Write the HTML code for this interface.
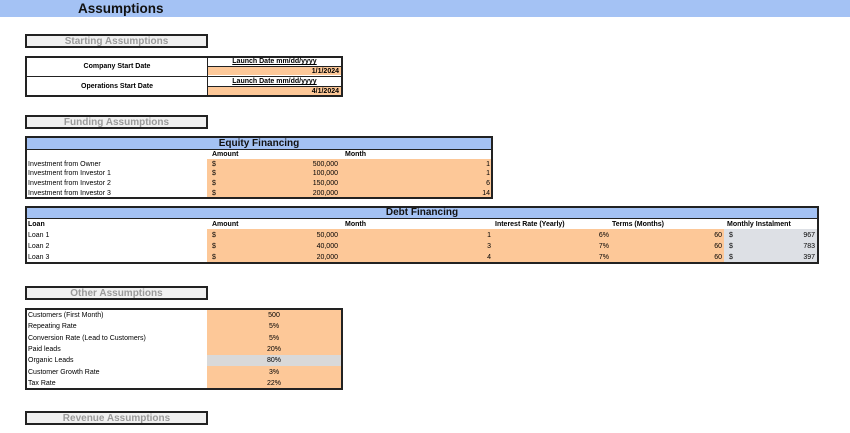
<!DOCTYPE html>
<html><head><style>
*{margin:0;padding:0;box-sizing:border-box}
body{width:850px;height:433px;background:#fff;position:relative;overflow:hidden;font-family:"Liberation Sans",sans-serif;color:#000}
.a{position:absolute}
.sec{position:absolute;left:25px;width:183px;height:14px;background:#f0f0f0;border:2px solid #222;color:#9a9a9a;font-weight:bold;font-size:10px;text-align:center;line-height:11px}
.t{font-size:7px;line-height:7px;white-space:nowrap}
.b{font-weight:bold}
.r{text-align:right}
.or{background:#fdc898}
.gy{background:#dde0e5}
.box{position:absolute;border:2px solid #222}
.hdr{background:#a4c2f4;font-weight:bold;font-size:10px;text-align:center;color:#111;border-bottom:1px solid #222}
</style></head><body>
<div class="a" style="left:0;top:0;width:850px;height:17px;background:#a4c2f4"></div>
<div class="a b" style="left:78px;top:1px;font-size:13.5px;line-height:15px;color:#111">Assumptions</div>

<div class="sec" style="top:34px">Starting Assumptions</div>

<div class="box" style="left:25px;top:56px;width:318px;height:41px"></div>
<div class="a" style="left:27px;top:76px;width:314px;height:1px;background:#222"></div>
<div class="a" style="left:207px;top:58px;width:1px;height:37px;background:#222"></div>
<div class="a t b" style="left:27px;top:63px;width:180px;text-align:center">Company Start Date</div>
<div class="a t b" style="left:27px;top:83px;width:180px;text-align:center">Operations Start Date</div>
<div class="a t b" style="left:208px;top:58px;width:133px;text-align:center;text-decoration:underline">Launch Date mm/dd/yyyy</div>
<div class="a or t b r" style="left:208px;top:66px;width:133px;height:9px;padding:1px 2px;border-top:1px solid #222">1/1/2024</div>
<div class="a t b" style="left:208px;top:78px;width:133px;text-align:center;text-decoration:underline">Launch Date mm/dd/yyyy</div>
<div class="a or t b r" style="left:208px;top:86px;width:133px;height:9px;padding:1px 2px;border-top:1px solid #222">4/1/2024</div>

<div class="sec" style="top:115px">Funding Assumptions</div>

<div class="box" style="left:25px;top:136px;width:468px;height:63px"></div>
<div class="a hdr" style="left:27px;top:138px;width:464px;height:12px;line-height:11px">Equity Financing</div>
<div class="a t b" style="left:212px;top:151px">Amount</div>
<div class="a t b" style="left:345px;top:151px">Month</div>
<div class="a or" style="left:207px;top:159px;width:284px;height:38px"></div>
<div class="a t" style="left:28px;top:161px">Investment from Owner</div>
<div class="a t" style="left:28px;top:170px">Investment from Investor 1</div>
<div class="a t" style="left:28px;top:180px">Investment from Investor 2</div>
<div class="a t" style="left:28px;top:190px">Investment from Investor 3</div>
<div class="a t" style="left:212px;top:161px">$</div><div class="a t" style="left:212px;top:170px">$</div><div class="a t" style="left:212px;top:180px">$</div><div class="a t" style="left:212px;top:190px">$</div>
<div class="a t r" style="left:280px;top:161px;width:58px">500,000</div>
<div class="a t r" style="left:280px;top:170px;width:58px">100,000</div>
<div class="a t r" style="left:280px;top:180px;width:58px">150,000</div>
<div class="a t r" style="left:280px;top:190px;width:58px">200,000</div>
<div class="a t r" style="left:450px;top:161px;width:40px">1</div>
<div class="a t r" style="left:450px;top:170px;width:40px">1</div>
<div class="a t r" style="left:450px;top:180px;width:40px">6</div>
<div class="a t r" style="left:450px;top:190px;width:40px">14</div>

<div class="box" style="left:25px;top:206px;width:794px;height:58px"></div>
<div class="a hdr" style="left:27px;top:208px;width:790px;height:11px;line-height:10px">Debt Financing</div>
<div class="a t b" style="left:28px;top:221px">Loan</div>
<div class="a t b" style="left:212px;top:221px">Amount</div>
<div class="a t b" style="left:345px;top:221px">Month</div>
<div class="a t b" style="left:495px;top:221px">Interest Rate (Yearly)</div>
<div class="a t b" style="left:612px;top:221px">Terms (Months)</div>
<div class="a t b" style="left:727px;top:221px">Monthly Instalment</div>
<div class="a or" style="left:207px;top:229px;width:517px;height:33px"></div>
<div class="a gy" style="left:724px;top:229px;width:93px;height:33px"></div>
<div class="a t" style="left:28px;top:232px">Loan 1</div>
<div class="a t" style="left:28px;top:243px">Loan 2</div>
<div class="a t" style="left:28px;top:254px">Loan 3</div>
<div class="a t" style="left:212px;top:232px">$</div><div class="a t" style="left:212px;top:243px">$</div><div class="a t" style="left:212px;top:254px">$</div>
<div class="a t r" style="left:280px;top:232px;width:58px">50,000</div>
<div class="a t r" style="left:280px;top:243px;width:58px">40,000</div>
<div class="a t r" style="left:280px;top:254px;width:58px">20,000</div>
<div class="a t r" style="left:450px;top:232px;width:41px">1</div>
<div class="a t r" style="left:450px;top:243px;width:41px">3</div>
<div class="a t r" style="left:450px;top:254px;width:41px">4</div>
<div class="a t r" style="left:580px;top:232px;width:29px">6%</div>
<div class="a t r" style="left:580px;top:243px;width:29px">7%</div>
<div class="a t r" style="left:580px;top:254px;width:29px">7%</div>
<div class="a t r" style="left:690px;top:232px;width:32px">60</div>
<div class="a t r" style="left:690px;top:243px;width:32px">60</div>
<div class="a t r" style="left:690px;top:254px;width:32px">60</div>
<div class="a t" style="left:729px;top:232px">$</div><div class="a t" style="left:729px;top:243px">$</div><div class="a t" style="left:729px;top:254px">$</div>
<div class="a t r" style="left:780px;top:232px;width:35px">967</div>
<div class="a t r" style="left:780px;top:243px;width:35px">783</div>
<div class="a t r" style="left:780px;top:254px;width:35px">397</div>

<div class="sec" style="top:286px">Other Assumptions</div>

<div class="box" style="left:25px;top:308px;width:318px;height:82px"></div>
<div class="a or" style="left:207px;top:310px;width:134px;height:78px"></div>
<div class="a" style="left:207px;top:355px;width:134px;height:11px;background:#d9d9d9"></div>
<div class="a t" style="left:28px;top:312px">Customers (First Month)</div>
<div class="a t" style="left:28px;top:323px">Repeating Rate</div>
<div class="a t" style="left:28px;top:335px">Conversion Rate (Lead to Customers)</div>
<div class="a t" style="left:28px;top:346px">Paid leads</div>
<div class="a t" style="left:28px;top:357px">Organic Leads</div>
<div class="a t" style="left:28px;top:369px">Customer Growth Rate</div>
<div class="a t" style="left:28px;top:380px">Tax Rate</div>
<div class="a t" style="left:207px;top:312px;width:134px;text-align:center">500</div>
<div class="a t" style="left:207px;top:323px;width:134px;text-align:center">5%</div>
<div class="a t" style="left:207px;top:335px;width:134px;text-align:center">5%</div>
<div class="a t" style="left:207px;top:346px;width:134px;text-align:center">20%</div>
<div class="a t" style="left:207px;top:357px;width:134px;text-align:center">80%</div>
<div class="a t" style="left:207px;top:369px;width:134px;text-align:center">3%</div>
<div class="a t" style="left:207px;top:380px;width:134px;text-align:center">22%</div>

<div class="sec" style="top:411px">Revenue Assumptions</div>
</body></html>
